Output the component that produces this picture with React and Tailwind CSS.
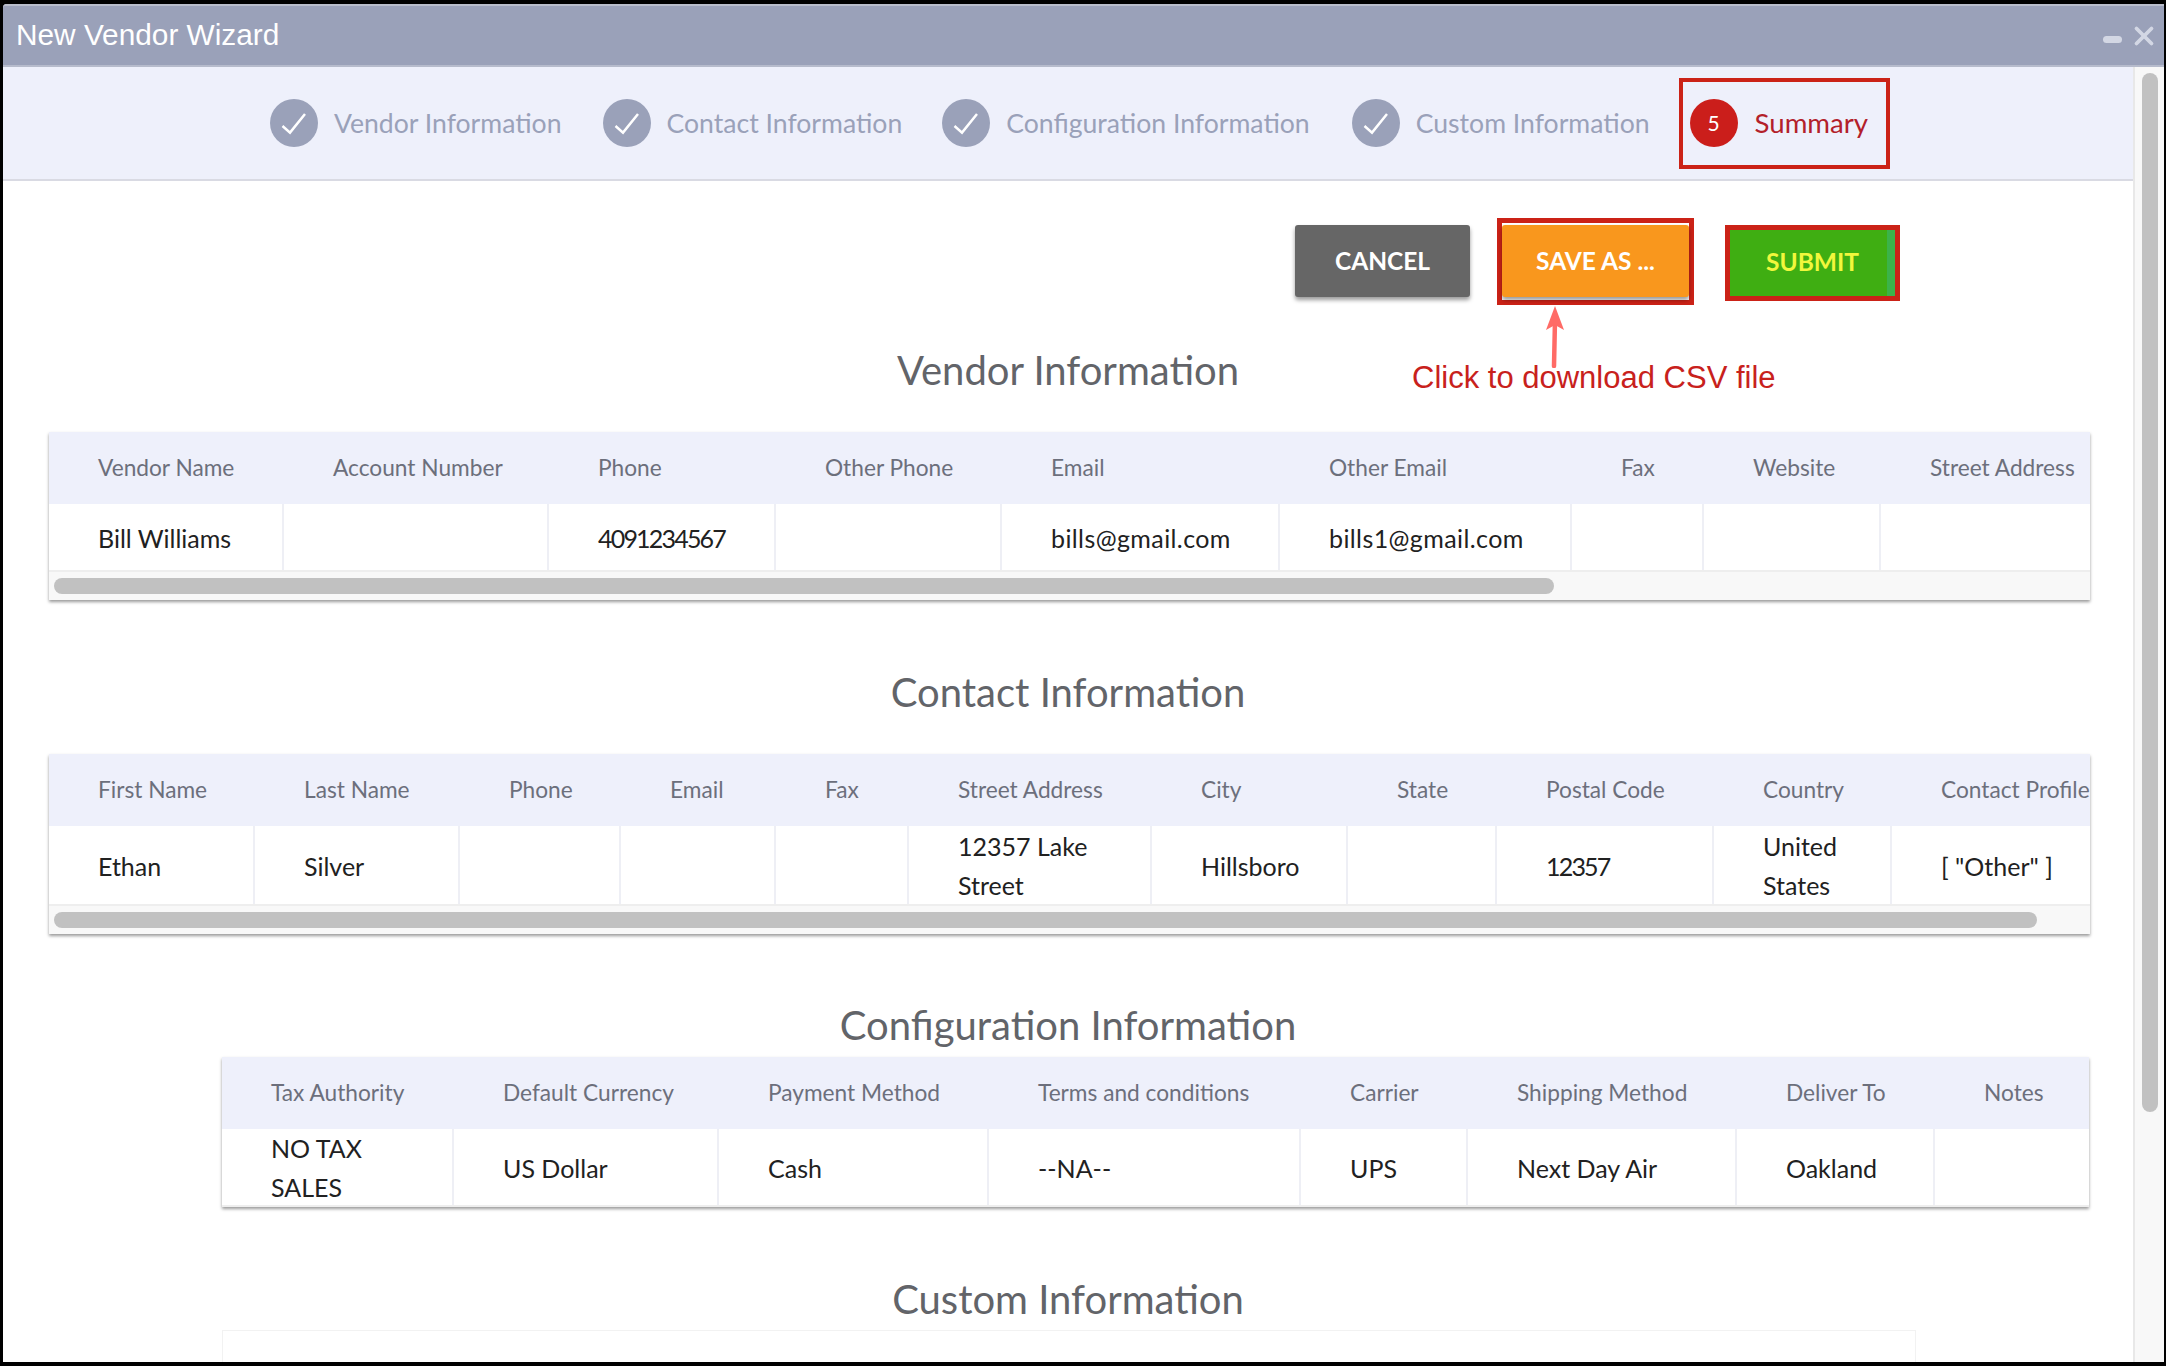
import { X } from 'lucide-react';

const steps = [
  { label: 'Vendor Information', gap: 'mr-[41px]' },
  { label: 'Contact Information', gap: 'mr-[40px]' },
  { label: 'Configuration Information', gap: 'mr-[42px]' },
  { label: 'Custom Information', gap: 'mr-[29px]' },
];

const vendorHeaders = ['Vendor Name', 'Account Number', 'Phone', 'Other Phone', 'Email', 'Other Email', 'Fax', 'Website', 'Street Address'];
const vendorRow = ['Bill Williams', '', '4091234567', '', 'bills@gmail.com', 'bills1@gmail.com', '', '', ''];

const contactHeaders = ['First Name', 'Last Name', 'Phone', 'Email', 'Fax', 'Street Address', 'City', 'State', 'Postal Code', 'Country', 'Contact Profile'];
const contactRow = ['Ethan', 'Silver', '', '', '', '12357 Lake Street', 'Hillsboro', '', '12357', 'United States', '[ "Other" ]'];

const configHeaders = ['Tax Authority', 'Default Currency', 'Payment Method', 'Terms and conditions', 'Carrier', 'Shipping Method', 'Deliver To', 'Notes'];
const configRow = ['NO TAX SALES', 'US Dollar', 'Cash', '--NA--', 'UPS', 'Next Day Air', 'Oakland', ''];

// digits and emails run a little narrow/wide in the fallback font
const cellClass = (cell) => {
  if (/^\d+$/.test(cell)) return 'tracking-[-1.8px]';
  if (cell.includes('@')) return 'tracking-[0.4px]';
  if (cell.startsWith('[')) return 'whitespace-nowrap';
  return '';
};

const SummaryTable = ({ headers, row, cols, rowHeight, thumb, className }) => (
  <div className={`bg-white shadow-[0_2px_3px_rgba(0,0,0,0.4)] overflow-hidden ${className}`}>
    <div className={`grid ${cols} h-[72px] bg-[#eef0fb]`}>
      {headers.map((h) => (
        <div key={h} className="pl-[49px] flex items-center whitespace-nowrap text-[22.7px] text-[#6c6f7c]">{h}</div>
      ))}
    </div>
    <div className={`grid ${cols} ${rowHeight} border-b-2 border-[#eeeeee]`}>
      {row.map((cell, i) => (
        <div key={i} className="px-[49px] pt-[2px] flex items-center overflow-hidden border-r-2 border-[#eeeff5] last:border-r-0 leading-[39px] text-[25px] text-[#212121]">
          <span className={cellClass(cell)}>{cell}</span>
        </div>
      ))}
    </div>
    {thumb && (
      <div className="h-[28px] bg-[#f8f8f8] pt-[6px] pl-[5px]">
        <div className={`h-[16px] rounded-full bg-[#c1c1c1] ${thumb}`} />
      </div>
    )}
  </div>
);

const Heading = ({ children, className }) => (
  <h2 className={`text-center text-[40px] leading-[48px] text-[#626469] ${className}`}>{children}</h2>
);

export default function App() {
  return (
    <div className="relative w-[2166px] h-[1366px] overflow-hidden bg-black pt-[4px] pl-[3px] pr-[2px] pb-[4px] font-['Lato','Noto_Sans',sans-serif]">
      <div className="flex flex-col h-full bg-white overflow-hidden rounded-tl-[4px]">
        <div className="flex items-center justify-between h-[63px] shrink-0 bg-[#9aa1b9] border-t-2 border-b-2 border-t-[#b9bdcb] border-b-[#b6bbcc] pl-[13px] pr-[5px]">
          <span className="font-['Liberation_Sans',sans-serif] text-[29.8px] text-white">New Vendor Wizard</span>
          <div className="flex items-center gap-[7px] text-[#d3d7e4]">
            <div className="w-[19px] h-[7px] mt-[8px] rounded-full bg-[#d3d7e4]" />
            <X className="w-[30px] h-[30px]" strokeWidth={3} />
          </div>
        </div>

        <div className="flex flex-1 min-h-0">
          <div className="flex-1 min-w-0">
            <div className="flex items-center justify-center h-[114px] pl-[24px] bg-[#eef0fb] border-b-2 border-[#d9dae3] text-[26.6px]">
              {steps.map((s) => (
                <div key={s.label} className={`flex items-center ${s.gap}`}>
                  <div className="flex items-center justify-center w-[48px] h-[48px] rounded-full bg-[#9aa1b9] mr-[16px]">
                    <svg className="w-[48px] h-[48px]" viewBox="0 0 48 48" fill="none">
                      <path d="M12.5 27 L20 33.6 L35 15" stroke="white" strokeWidth="2.5" />
                    </svg>
                  </div>
                  <span className="pt-[2px] text-[#9aa1b9] whitespace-nowrap">{s.label}</span>
                </div>
              ))}
              <div className="flex items-center h-[91px] border-[4px] border-[#cb2217] pl-[7px] pr-[18px]">
                <div className="flex items-center justify-center w-[48px] h-[48px] rounded-full bg-[#cb1e1b] mr-[17px] text-[21px] text-white">5</div>
                <span className="text-[27.6px] text-[#b3202a] whitespace-nowrap">Summary</span>
              </div>
            </div>

            <div className="relative">
              <div className="flex justify-end items-start pt-[37px] pr-[233px] gap-[27px] text-[24.5px] font-bold">
                <button className="mt-[7px] w-[175px] h-[72px] rounded-[3px] bg-[#666666] text-white shadow-[0_3px_4px_rgba(0,0,0,0.4)]">CANCEL</button>
                <div className="w-[197px] h-[87px] border-[5px] border-[#cb2217] pt-[2px]">
                  <button className="w-full h-[72px] rounded-[3px] bg-[#f9971d] text-white shadow-[0_3px_4px_rgba(0,0,0,0.4)]">SAVE AS ...</button>
                </div>
                <div className="mt-[7px] ml-[4px] w-[175px] h-[76px] border-[5px] border-[#cb2217] bg-[#3fae12] text-[#f1f73c] relative">
                  <button className="w-full h-full pb-[2px]">SUBMIT</button>
                  <div className="absolute right-0 top-0 bottom-0 w-[8px] bg-[#3bb34a]" />
                </div>
              </div>

              {/* annotation under the save button */}
              <svg className="absolute left-[1540px] top-[125px] w-[24px] h-[62px]" viewBox="0 0 24 62" fill="none">
                <path d="M11 60 L12 14" stroke="#ff6b66" strokeWidth="4.5" strokeLinecap="round" />
                <path d="M12 0 L21 24 L12 19 L3 24 Z" fill="#ff6b66" />
              </svg>
              <span className="absolute left-[1409px] top-[177px] font-['Liberation_Sans',sans-serif] text-[31px] leading-[40px] text-[#c8211c] whitespace-nowrap">Click to download CSV file</span>

              <Heading className="mt-[41px]">Vendor Information</Heading>
              <SummaryTable
                className="mt-[38px] ml-[46px] mr-[43px] h-[168px]"
                headers={vendorHeaders}
                row={vendorRow}
                cols="grid-cols-[235px_265px_227px_226px_278px_292px_132px_177px_210px]"
                rowHeight="h-[68px]"
                thumb="w-[1500px]"
              />

              <Heading className="mt-[68px]">Contact Information</Heading>
              <SummaryTable
                className="mt-[38px] ml-[46px] mr-[43px] h-[180px]"
                headers={contactHeaders}
                row={contactRow}
                cols="grid-cols-[206px_205px_161px_155px_133px_243px_196px_149px_217px_178px_199px]"
                rowHeight="h-[80px]"
                thumb="w-[1983px]"
              />

              <Heading className="mt-[67px]">Configuration Information</Heading>
              <SummaryTable
                className="mt-[8px] ml-[219px] mr-[44px] h-[150px]"
                headers={configHeaders}
                row={configRow}
                cols="grid-cols-[232px_265px_270px_312px_167px_269px_198px_155px]"
                rowHeight="h-[78px]"
              />

              <Heading className="mt-[68px]">Custom Information</Heading>
              <div className="mt-[7px] ml-[219px] mr-[217px] h-[60px] bg-white border-t border-x border-[#f2f2f2]" />
            </div>
          </div>

          <div className="w-[31px] shrink-0 bg-[#f8f8f8] border-l-2 border-[#e8e8e8] pl-[7px] pt-[6px]">
            <div className="w-[16px] h-[1039px] rounded-full bg-[#c1c1c1]" />
          </div>
        </div>
      </div>
    </div>
  );
}
